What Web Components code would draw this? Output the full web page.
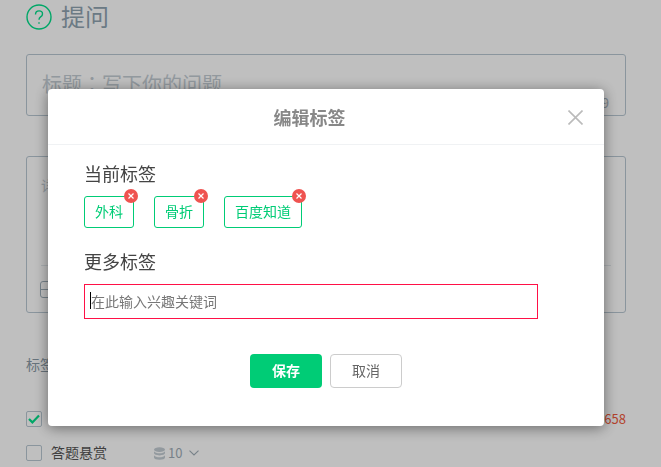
<!DOCTYPE html>
<html lang="zh-CN">
<head>
<meta charset="utf-8">
<title>提问</title>
<style>
    html, body { margin: 0; padding: 0; height: 100%; overflow: hidden; background: #fff; }
    body { font-family: "Noto Sans CJK SC", "Liberation Sans", sans-serif; }
</style>
</head>
<body>
<ask-page></ask-page>
<modal-overlay>
    <edit-tags-dialog></edit-tags-dialog>
</modal-overlay>

<script>
const define = (name, html) => {
    customElements.define(name, class extends HTMLElement {
        constructor(){
            super();
            const template = document.createElement('template');
            template.innerHTML = html;
            this.attachShadow({mode:'open'}).appendChild(template.content.cloneNode(true));
        }
    });
};

// page behind the dialog
define('ask-page', `
    <style>
        :host { display: block; box-sizing: border-box; width: 661px; height: 467px; padding: 4px 35px 0 26px; overflow: hidden; color: #8a9aa6; font-size: 14px; }
        .head { display: flex; align-items: center; gap: 9px; height: 26px; }
        .head span { font-size: 24px; line-height: 26px; padding-bottom: 3px; color: #8fa3b1; }
        .box { box-sizing: border-box; border: 1px solid #b8c7d2; border-radius: 3px; position: relative; }
        .title { height: 62px; margin-top: 24px; padding: 16px 15px 0; font-size: 20px; line-height: 26px; color: #c3ccd3; }
        .title i { font-style: normal; font-family: "Noto Sans CJK TC", sans-serif; }
        .count { position: absolute; right: 16px; bottom: 4px; font-size: 13px; line-height: 16px; color: #a9b5be; }
        .body { height: 157px; margin-top: 40px; padding: 18px 14px 0; color: #c3ccd3; }
        .tool { position: absolute; left: 14px; right: 14px; top: 108px; border-top: 1px solid #e4e9ed; padding-top: 15px; }
        .tool i { display: block; box-sizing: border-box; width: 20px; height: 17px; margin-left: -1px; border: 1px solid #a0b0bb; border-radius: 3px; position: relative; }
        .tool i::after { content: ""; position: absolute; left: 0; right: 0; top: 7px; border-top: 1px solid #a0b0bb; }
        .tags { margin-top: 41px; line-height: 20px; }
        .row { display: flex; align-items: center; height: 16px; color: #555; }
        .check { box-sizing: border-box; width: 16px; height: 16px; border: 1px solid #b8c7d2; border-radius: 2px; display: flex; align-items: center; justify-content: center; }
        .first { margin-top: 37px; justify-content: space-between; }
        .second { margin-top: 18px; }
        .second b { font-weight: 400; margin-left: 9px; line-height: 16px; padding-bottom: 2px; }
        .coin { display: flex; align-items: center; margin-left: 47px; color: #a0adb7; gap: 3px; }
        .coin span { padding-bottom: 1px; font-size: 13px; }
        .chev { margin-left: 7px; }
        .num { color: #f05a3c; font-size: 13px; line-height: 16px; }
    </style>
    <div class="head">
        <svg width="26" height="26" viewBox="0 0 26 26" fill="none" stroke="#00df8a" stroke-width="1.4">
            <circle cx="13" cy="13" r="12"/>
            <path d="M9.500 10.500c0-2.200 1.500-3.600 3.600-3.600 2 0 3.400 1.300 3.400 3 0 1.400-.8 2.200-1.900 3-1 .7-1.600 1.300-1.600 2.800"/>
            <path d="M13 18.200v1.600"/>
        </svg>
        <span>提问</span>
    </div>
    <div class="box title">标题<i lang="zh-TW">：</i>写下你的问题<span class="count">0/49</span></div>
    <div class="box body">详细<div class="tool"><i></i></div></div>
    <div class="tags">标签</div>
    <div class="row first">
        <span class="check">
            <svg width="12" height="10" viewBox="0 0 12 10" fill="none" stroke="#00df8a" stroke-width="2.200"><path d="M1 5l3.400 3.400L11 1.500"/></svg>
        </span>
        <span class="num">658</span>
    </div>
    <div class="row second">
        <span class="check"></span>
        <b>答题悬赏</b>
        <span class="coin">
            <svg width="11" height="13" viewBox="0 0 11 13" fill="#c3ccd3">
                <ellipse cx="5.500" cy="2.600" rx="5.500" ry="2.400"/>
                <path d="M0 4.200c1 1.500 3 2 5.500 2s4.500-.5 5.500-2v1.900c0 1.300-2.500 2.300-5.500 2.300S0 7.400 0 6.100z"/>
                <path d="M0 8.200c1 1.500 3 2 5.500 2s4.500-.5 5.500-2v2.300c0 1.300-2.500 2.300-5.500 2.300S0 11.800 0 10.500z"/>
            </svg>
            <span>10</span>
        </span>
        <svg class="chev" width="10" height="6" viewBox="0 0 10 6" fill="none" stroke="#a0adb7" stroke-width="1.100"><path d="M.5.700L5 5l4.500-4.300"/></svg>
    </div>
`);

define('modal-overlay', `
    <style>
        :host { display: block; position: fixed; inset: 0; box-sizing: border-box; padding: 89px 57px 0 48px; background: rgba(0,0,0,.25); }
    </style>
    <slot></slot>
`);

define('tag-chip', `
    <style>
        :host { display: block; position: relative; box-sizing: border-box; height: 32px; padding: 0 10px; border: 1px solid #00cc76; border-radius: 3px; color: #00cc76; font-size: 14px; line-height: 28px; }
        .remove { position: absolute; top: -8px; right: -5px; width: 14px; height: 14px; border-radius: 50%; background: #ef5350; display: flex; align-items: center; justify-content: center; }
    </style>
    <slot></slot>
    <span class="remove">
        <svg width="6" height="6" viewBox="0 0 6 6" stroke="#fff" stroke-width="1.200"><path d="M.5.500l5 5M5.500.500l-5 5"/></svg>
    </span>
`);

define('edit-tags-dialog', `
    <style>
        :host { display: block; width: 556px; height: 337px; box-sizing: border-box; background: #fff; border-radius: 4px; box-shadow: 0 2px 14px rgba(0,0,0,.45); }
        header { box-sizing: border-box; height: 56px; border-bottom: 1px solid #f0f2f4; position: relative; display: flex; align-items: center; justify-content: center; padding: 0 33px 0 0; }
        h2 { margin: 0; font-size: 18px; font-weight: 700; color: #888; line-height: 24px; }
        .close { position: absolute; right: 21px; top: 21px; }
        main { padding: 16px 66px 0 36px; }
        h3 { margin: 0; font-size: 18px; font-weight: 400; color: #444; line-height: 24px; }
        .chips { display: flex; gap: 20px; margin-top: 11px; }
        .more { margin-top: 21px; }
        .field { box-sizing: border-box; display: flex; align-items: center; height: 35px; margin-top: 11px; padding: 0 5px 2px; border: 1px solid #ff1046; font-size: 14px; color: #777; }
        .caret { flex: none; width: 1px; height: 17px; background: #000; }
        .actions { display: flex; justify-content: center; gap: 8px; margin-top: 35px; padding-left: 30px; }
        button { box-sizing: border-box; width: 72px; height: 34px; padding: 0 0 2px; border-radius: 4px; font: inherit; font-size: 14px; }
        .save { border: 0; background: #00cc76; color: #fff; font-weight: 700; }
        .cancel { border: 1px solid #ccc; background: #fff; color: #666; }
    </style>
    <header>
        <h2>编辑标签</h2>
        <svg class="close" width="15" height="15" viewBox="0 0 15 15" stroke="#bbb" stroke-width="1.600"><path d="M.5.500l14 14M14.500.500l-14 14"/></svg>
    </header>
    <main>
        <h3>当前标签</h3>
        <div class="chips">
            <tag-chip>外科</tag-chip>
            <tag-chip>骨折</tag-chip>
            <tag-chip>百度知道</tag-chip>
        </div>
        <h3 class="more">更多标签</h3>
        <div class="field"><span class="caret"></span><span>在此输入兴趣关键词</span></div>
        <div class="actions">
            <button class="save">保存</button>
            <button class="cancel">取消</button>
        </div>
    </main>
`);
</script>
</body>
</html>
